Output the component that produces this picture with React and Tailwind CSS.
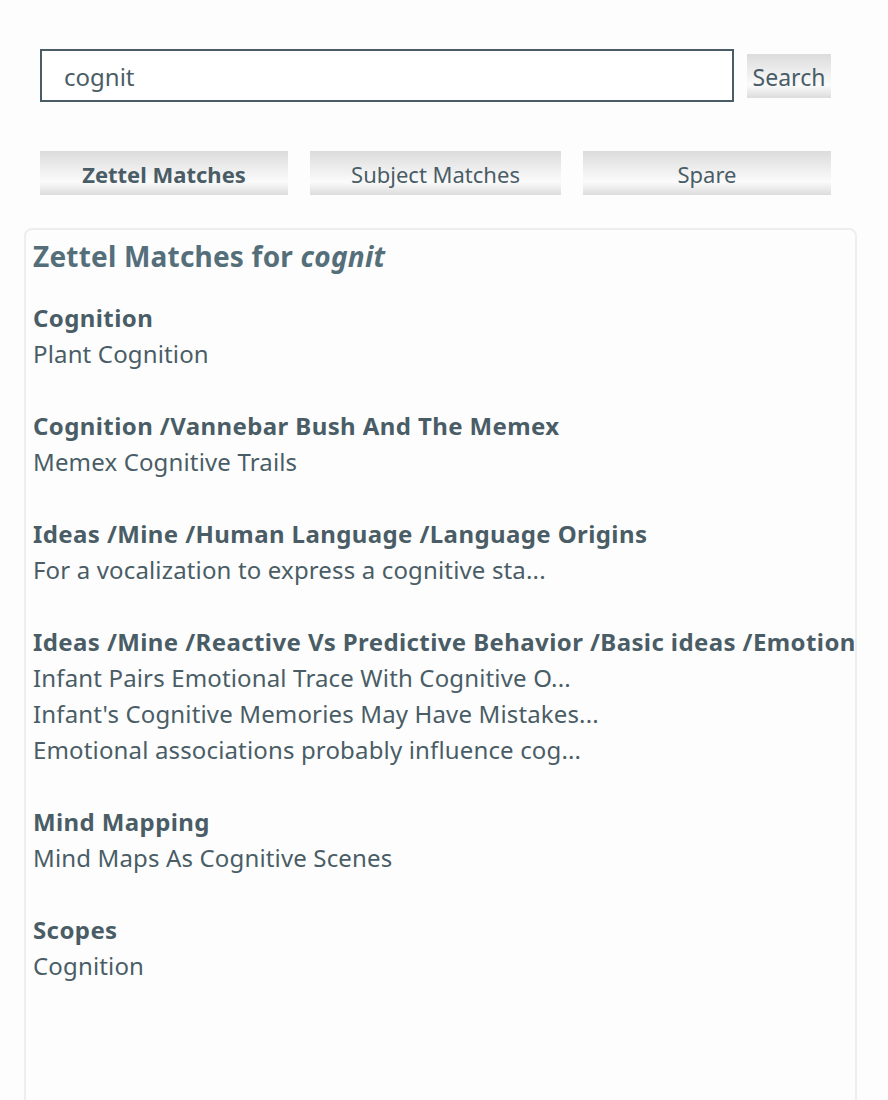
import React from "react";

const groups = [
  { title: "Cognition", items: ["Plant Cognition"] },
  { title: "Cognition /Vannebar Bush And The Memex", items: ["Memex Cognitive Trails"] },
  { title: "Ideas /Mine /Human Language /Language Origins", items: ["For a vocalization to express a cognitive sta..."] },
  {
    title: "Ideas /Mine /Reactive Vs Predictive Behavior /Basic ideas /Emotional associations",
    items: [
      "Infant Pairs Emotional Trace With Cognitive O...",
      "Infant's Cognitive Memories May Have Mistakes...",
      "Emotional associations probably influence cog...",
    ],
  },
  { title: "Mind Mapping", items: ["Mind Maps As Cognitive Scenes"] },
  { title: "Scopes", items: ["Cognition"] },
];

const btn =
  "bg-[linear-gradient(to_bottom,#dcdcdc_0%,#f4f4f4_55%,#fbfbfb_70%,#dcdcdc_100%)] text-[#4a5d66] leading-none";

export default function App() {
  return (
    <div
      className="w-[888px] h-[1100px] overflow-hidden bg-[#fdfdfd] text-[#4a5d66]"
      style={{ fontFamily: '"Noto Sans", "Open Sans", sans-serif' }}
    >
      <div className="flex items-center pt-[49px] pl-[40px]">
        <div className="w-[694px] h-[53px] border-2 border-[#4a5d66] bg-white flex items-center pl-[22px] pt-[3px] text-[24px]">
          cognit
        </div>
        <button className={`${btn} text-[23px] ml-[13px] w-[84px] h-[44px] flex items-center justify-center pt-[3px]`}>
          Search
        </button>
      </div>
      <div className="flex pl-[40px] mt-[49px] gap-[22px] text-[22px]">
        <button className={`${btn} w-[248px] h-[44px] font-bold pt-[2px]`}>Zettel Matches</button>
        <button className={`${btn} w-[251px] h-[44px] pt-[2px]`}>Subject Matches</button>
        <button className={`${btn} w-[248px] h-[44px] pt-[2px]`}>Spare</button>
      </div>
      <div className="mt-[33px] ml-[24px] w-[833px] h-[900px] border-2 border-[#eeeeee] rounded-[8px] overflow-hidden pl-[7px] pt-[6px]">
        <h1 className="text-[28px] font-bold text-[#546e7a] leading-[40px] whitespace-nowrap tracking-[0.2px]">
          Zettel Matches for <i>cognit</i>
        </h1>
        <div className="mt-[24px] text-[24px] leading-[36px] tracking-[0.15px]">
          {groups.map((g) => (
            <div key={g.title} className="mb-[36px]">
              <div className="font-bold whitespace-nowrap tracking-[0.4px]">{g.title}</div>
              {g.items.map((it) => (
                <div key={it} className="whitespace-nowrap">{it}</div>
              ))}
            </div>
          ))}
        </div>
      </div>
    </div>
  );
}
